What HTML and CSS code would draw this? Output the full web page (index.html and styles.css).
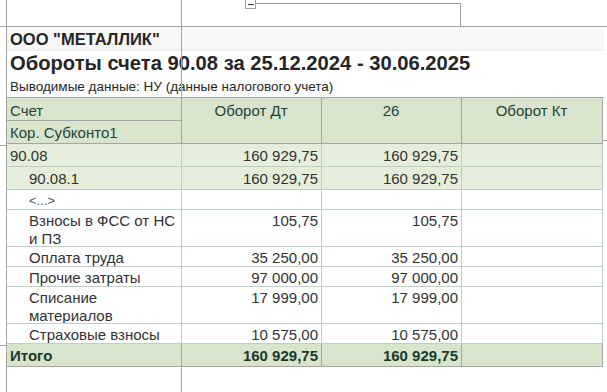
FILE: index.html
```html
<!DOCTYPE html>
<html lang="ru">
<head>
<meta charset="utf-8">
<title>Обороты счета 90.08</title>
<link rel="stylesheet" href="styles.css">
</head>
<body>
<div class="sheet">
  <div class="content">
    <div class="company">ООО "МЕТАЛЛИК"</div>
    <div class="title">Обороты счета 90.08 за 25.12.2024 - 30.06.2025</div>
    <div class="desc">Выводимые данные: НУ (данные налогового учета)</div>
    <div class="tbl">
      <div class="c h h1 first">Счет</div>
      <div class="c h span center">Оборот Дт</div>
      <div class="c h span center">26</div>
      <div class="c h span center">Оборот Кт</div>
      <div class="c h h2 first">Кор. Субконто1</div>

      <div class="c g r23 first">90.08</div>
      <div class="c g r23 num">160 929,75</div>
      <div class="c g r23 num">160 929,75</div>
      <div class="c g r23"></div>

      <div class="c g r23 first ind">90.08.1</div>
      <div class="c g r23 num">160 929,75</div>
      <div class="c g r23 num">160 929,75</div>
      <div class="c g r23"></div>

      <div class="c d r20 first ind dots">&lt;...&gt;</div>
      <div class="c d r20"></div>
      <div class="c d r20"></div>
      <div class="c d r20"></div>

      <div class="c d r37 first ind">Взносы в ФСС от НС и ПЗ</div>
      <div class="c d r37 num">105,75</div>
      <div class="c d r37 num">105,75</div>
      <div class="c d r37"></div>

      <div class="c d r20 first ind">Оплата труда</div>
      <div class="c d r20 num">35 250,00</div>
      <div class="c d r20 num">35 250,00</div>
      <div class="c d r20"></div>

      <div class="c d r20 first ind">Прочие затраты</div>
      <div class="c d r20 num">97 000,00</div>
      <div class="c d r20 num">97 000,00</div>
      <div class="c d r20"></div>

      <div class="c d r37 first ind">Списание материалов</div>
      <div class="c d r37 num">17 999,00</div>
      <div class="c d r37 num">17 999,00</div>
      <div class="c d r37"></div>

      <div class="c d r20 first ind">Страховые взносы</div>
      <div class="c d r20 num">10 575,00</div>
      <div class="c d r20 num">10 575,00</div>
      <div class="c d r20"></div>

      <div class="c t r23 first">Итого</div>
      <div class="c t r23 num">160 929,75</div>
      <div class="c t r23 num">160 929,75</div>
      <div class="c t r23"></div>
    </div>
  </div>

  <div class="line v v1"></div>
  <div class="line v v2"></div>
  <div class="line hz top"></div>
  <div class="line stub s1"></div>
  <div class="line stub s2"></div>
  <div class="line stub s3"></div>

  <div class="group">
    <div class="group-box"><span class="minus"></span></div>
    <div class="group-line"></div>
  </div>
</div>
</body>
</html>
```

FILE: styles.css
```css
html, body {
  margin: 0;
  padding: 0;
  background: #ffffff;
}

body {
  font-family: "Liberation Sans", Arial, sans-serif;
  color: #333333;
}

.sheet {
  position: relative;
  width: 607px;
  height: 392px;
  overflow: hidden;
  background: #ffffff;
}

.content {
  position: relative;
  padding-top: 27px;
}

.company {
  margin-left: 7px;
  width: 597px;
  height: 24px;
  line-height: 24px;
  padding-left: 3px;
  box-sizing: border-box;
  background: #f7f7f7;
  border-bottom: 2px solid #f0f0f0;
  font-weight: bold;
  font-size: 16.5px;
  color: #262626;
}

.title {
  margin-left: 7px;
  padding-left: 3px;
  height: 25px;
  line-height: 25px;
  font-weight: bold;
  font-size: 20.2px;
  color: #262626;
  white-space: nowrap;
}

.desc {
  margin-left: 7px;
  padding-left: 3px;
  padding-top: 3px;
  height: 20px;
  box-sizing: border-box;
  line-height: 16px;
  font-size: 13.5px;
  color: #262626;
  white-space: nowrap;
}

.tbl {
  margin-top: 1px;
  margin-left: 6px;
  width: 597px;
  display: grid;
  grid-template-columns: 175px 140px 140px 141px;
  border-top: 1px solid #a6a6a6;
  border-left: 1px solid #a6a6a6;
  font-size: 15px;
  line-height: 18px;
  position: relative;
  z-index: 1;
}

.c {
  box-sizing: border-box;
  border-right: 1px solid #bcd0c6;
  border-bottom: 1px solid #bcd0c6;
  padding: 3px 4px 0 3px;
  overflow: hidden;
}

.h {
  background: #d8e4cb;
  color: #24443a;
  border-color: #a6a6a6;
  padding-top: 4px;
}

.h1 { height: 23px; }
.h2 { height: 23px; padding-top: 3px; }
.span { grid-row: span 2; }
.center { text-align: center; }

.g { background: #e5eedb; }
.d { background: #ffffff; }
.t {
  background: #d8e4cb;
  color: #183a2c;
  font-weight: bold;
  border-color: #a6a6a6;
  padding-top: 3px;
}

.r20 { height: 20px; padding-top: 2px; }
.r23 { height: 23px; }
.r37 { height: 37px; padding-top: 2px; }

.first { padding-left: 3px; }
.ind { padding-left: 22px; }
.num { text-align: right; padding-right: 3px; }
.dots { color: #555555; font-size: 13px; }

.line {
  position: absolute;
  background: #a6a6a6;
}
.v { top: 0; width: 1px; height: 392px; }
.v1 { left: 6px; }
.v2 { left: 181px; }
.hz.top { left: 0; top: 26px; width: 607px; height: 1px; }
.stub { height: 1px; width: 6px; }
.s1 { left: 0; top: 145px; }
.s2 { left: 0; top: 345px; }
.s3 { left: 603px; top: 140px; width: 4px; }

.group {
  position: absolute;
  left: 245px;
  top: 0;
  width: 217px;
  height: 27px;
}
.group-box {
  position: absolute;
  left: 0;
  top: -1px;
  width: 11px;
  height: 10px;
  border: 1px solid #a0a0a0;
  background: #ffffff;
  box-sizing: border-box;
}
.minus {
  position: absolute;
  left: 2px;
  top: 4px;
  width: 6px;
  height: 1px;
  background: #333333;
}
.group-line {
  position: absolute;
  left: 11px;
  top: 3px;
  width: 205px;
  height: 23px;
  border-top: 1px solid #a0a0a0;
  border-right: 1px solid #a0a0a0;
  box-sizing: border-box;
}
```
